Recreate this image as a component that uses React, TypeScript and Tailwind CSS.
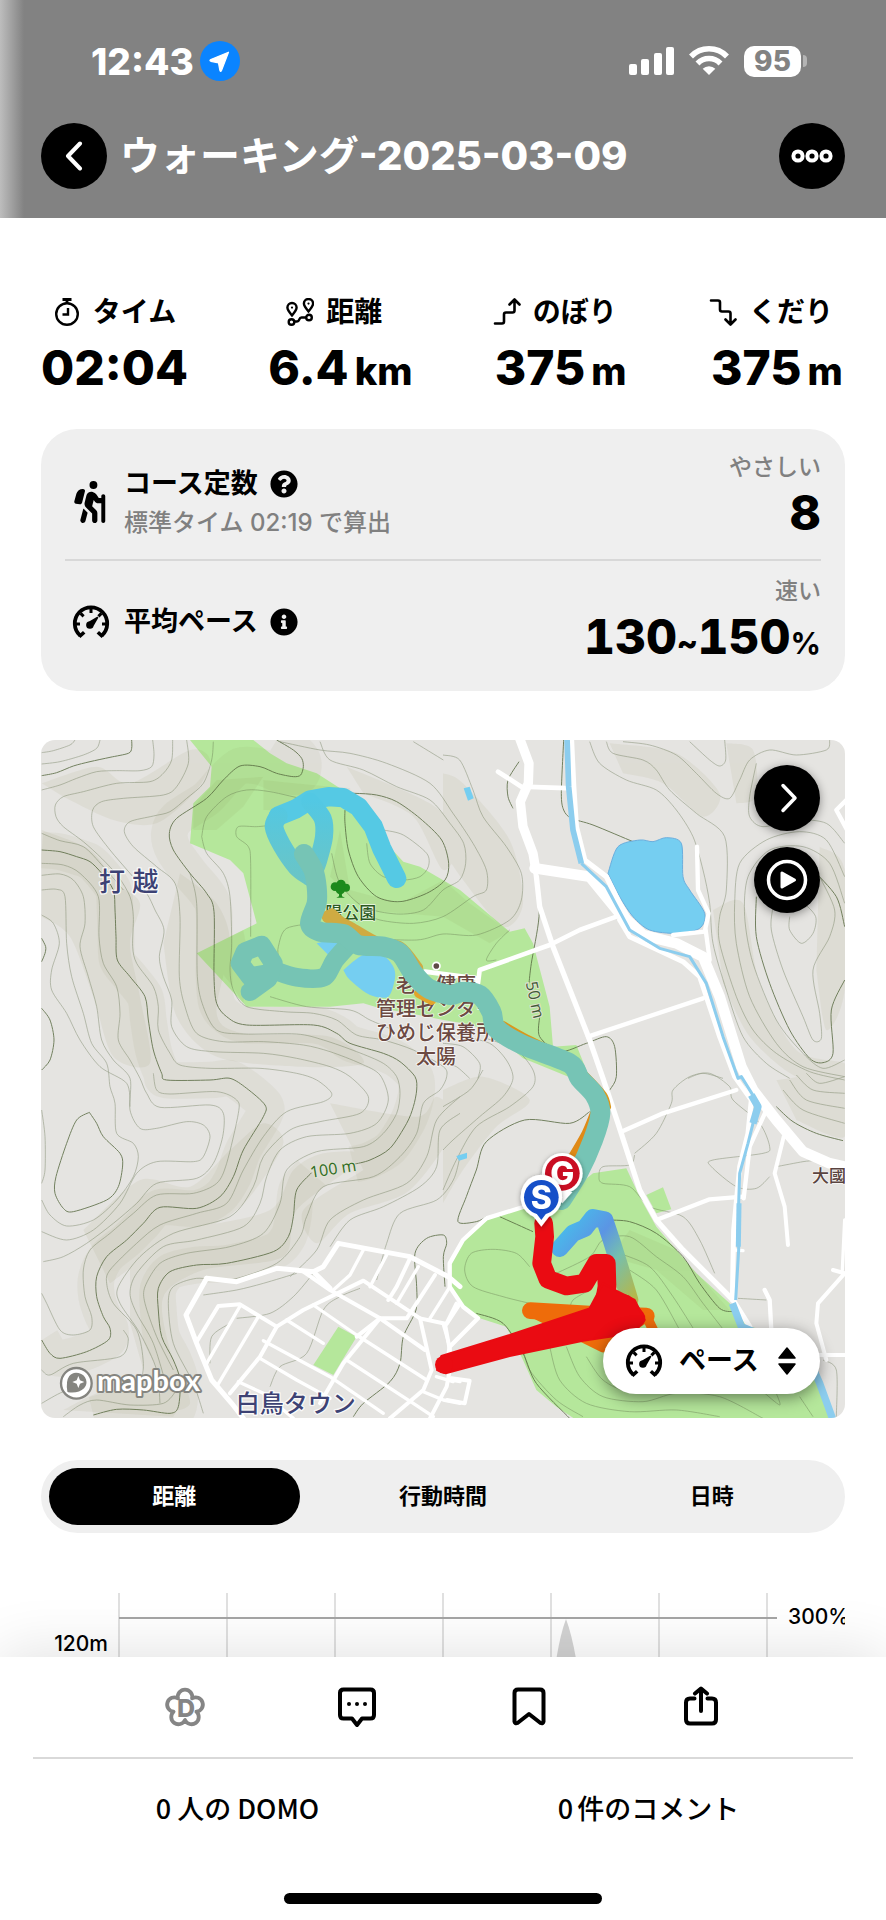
import React, { useState } from "react";
import { FaInfoCircle, FaQuestionCircle } from "react-icons/fa";
import { FaPersonHiking } from "react-icons/fa6";

/* ---------- map geometry ---------- */

// The map is split into four tiles; a letter in a trace switches the tile origin.
const TILES: Record<string, [number, number]> = {
  A: [-33, -30],
  B: [1206, -30],
  C: [-33, 990],
  D: [1206, 990],
};

function points(trace: string): [number, number][] {
  let origin = TILES.A;
  const out: [number, number][] = [];
  for (const token of trace.trim().split(/\s+/)) {
    if (TILES[token]) {
      origin = TILES[token];
    } else {
      const [x, y] = token.split(",").map(Number);
      out.push([x + origin[0], y + origin[1]]);
    }
  }
  return out;
}

function straight(trace: string, close = false) {
  return "M" + points(trace).map((p) => p.join(" ")).join("L") + (close ? "Z" : "");
}

function smooth(trace: string) {
  const p = points(trace);
  let d = `M${p[0][0]} ${p[0][1]}`;
  for (let i = 0; i < p.length - 1; i++) {
    const a = p[i - 1] || p[i];
    const b = p[i];
    const c = p[i + 1];
    const e = p[i + 2] || c;
    d += `C${b[0] + (c[0] - a[0]) / 7} ${b[1] + (c[1] - a[1]) / 7} ${c[0] - (e[0] - b[0]) / 7} ${c[1] - (e[1] - b[1]) / 7} ${c[0]} ${c[1]}`;
  }
  return d;
}

const majorContours = [
  "A 35,137 80,128 130,108 180,95 240,82 295,70 305,55 305,30",
  "A 35,360 90,365 140,380 180,395 215,430 250,480 255,540 258,620 262,690 300,740 345,800 355,870 370,960 395,1030 C 410,30 540,30 600,25 650,55 705,105 700,140 640,240 610,320 570,380 500,415 390,412 340,460 290,510 230,560 200,620 200,680 220,740 240,775 235,810 170,845 90,865 60,850 35,810",
  "A 740,30 790,60 815,85 820,110 812,135 790,140 740,130 690,110 630,108 580,150 530,205 440,265 418,310 430,360 480,430 530,490 552,545 552,740 560,820 590,860 650,885 850,885 920,910 960,940 1060,970 1110,995 1155,1040 C 1160,60 1150,110 1130,160 1080,235 1020,270 970,283",
  "C 845,308 800,360 790,440 775,500 730,545 590,580 500,585 420,605 385,655 385,720 395,800 430,870 450,930 445,1010 420,1030 340,1020 260,1018 190,1035",
  "A 35,835 60,870 72,930 60,990 35,1020",
  "A 35,625 47,650 45,670 35,695",
  "A 930,190 975,190 1040,195 1100,215 1170,265 1235,330 1256,400 1245,450 1190,490 1110,515 1040,500 985,440 955,360 945,280 945,240",
  "C 178,127 200,160 220,200 270,250 278,285 265,350 230,390 130,425 100,415 75,370 78,320 110,220 140,150 178,127",
  "C 1245,650 1240,560 1250,520 1240,495 1190,505 1155,550 1160,650 1158,720 1120,800 1110,880 1080,935 1000,1000 970,1040",
  "B 228,95 195,150 195,200 210,235",
  "B 362,30 355,190 362,240 385,265 450,285 570,335",
  "B 285,420 288,560 265,700 258,760",
  "B 290,860 290,920 350,965 430,940 490,920 515,950 520,1040 D 500,60 475,90",
  "D 440,125 380,160 245,150 130,215 100,300 70,380 45,455 100,455 130,440",
  "D 170,440 270,485",
  "D 490,450 560,455 640,490 720,560 770,640 830,715 870,725",
  "D 100,730 180,760 240,850 280,940 380,1045",
  "D 1000,110 1050,155 1120,190 1200,212",
  "B 940,500 940,620 980,760 1040,900 1100,985 1140,998 1170,970 1165,840 1205,750",
  "B 1110,420 1180,500 1205,590",
];

const minorContours = [
  "A 35,68 70,62 120,45 135,30",
  "A 35,102 90,95 160,75 200,55 210,30",
  "A 35,180 90,165 140,145 200,125 260,122 330,122 365,110 372,75 368,30",
  "A 428,30 425,90 400,130 360,155 260,160 160,185 100,200 76,225 78,260 100,290 160,335 215,385 265,440 300,500 310,560 308,650 320,700 370,770 385,830 385,900 420,970 450,1005 540,1015 690,1015 800,1030 860,1050 C 905,70 880,95 770,125 700,200 640,300 590,400 500,430 390,465 320,520 240,600 230,640 250,700 320,780 340,880 330,960",
  "A 470,30 475,100 440,170 400,195 280,205 215,215 188,240 190,290 240,360 300,430 350,490 375,540 402,600 388,680 400,740 425,810 425,890 470,950 550,965 700,970 800,985 900,1010 960,1040 C 1015,80 990,130 870,155 780,180 700,260 670,350 600,440 430,490 330,560 265,650 270,700 330,790 380,900 390,1000",
  "A 550,35 545,90 520,160 470,205 420,245 370,258 300,275 283,305 310,350 380,410 435,460 450,560 448,740 465,830 500,910 580,935 700,935 820,945 900,965 990,1000 1050,1035 C 1075,90 1040,160 960,190 830,200 750,240 710,320 690,400 640,470 500,510 400,530 320,610 300,670 320,730 370,820 410,950",
  "A 480,430 500,520 502,740 520,830 560,900 640,912 800,912 880,930 980,965 1060,1000 1100,1040 C 1110,70 1100,130 1060,190 1000,230 860,245 770,300 750,400 700,490 600,530 470,550 390,580 345,650 345,700 380,800 430,900",
  "A 35,310 90,332 160,350 220,410 280,480",
  "A 35,400 100,405 150,430 205,500 207,620 220,700 260,770 270,850 265,930 300,990 330,1045 C 350,70 390,112 540,105 580,130 578,200 550,280 500,325 380,340 320,400 250,460 170,520 100,560 40,575",
  "A 35,436 90,432 130,450 160,500 165,580 150,650 175,740 200,830 215,930 250,990 300,1045 C 300,120 330,175 380,175 470,155 520,165 540,200 520,260 490,275 380,275 320,310 270,400 190,480 110,510 35,485",
  "A 35,480 80,478 105,500 110,640 125,740 160,850 185,940 230,1000 C 240,50 255,100 260,190 310,220 325,260 310,320 260,390 190,450 110,468 60,435 35,390",
  "A 35,555 70,580 88,640 65,720 65,780 110,850 150,930 210,1010 C 290,40 300,110",
  "A 370,1030 C 380,60 420,72 560,65 620,90 625,130 590,280 560,340 490,370 380,375 310,430 240,490 180,540 160,600 165,680 185,740 180,780 130,795 90,780 50,700 35,670",
  "A 515,320 530,260 590,200 650,180 720,185 830,210",
  "A 515,320 530,370 580,430 600,500 605,640 600,720 610,780 650,830 760,845 850,850 920,870 980,915 1060,930 1150,960 1240,1010 C 1250,20 1230,60 1180,100 1160,190 1110,260 1030,320 880,350 830,440 810,500 740,580 600,630 500,625 430,650 415,700 430,820 490,940 520,1030",
  "A 730,285 680,290 625,290 620,320 655,350 662,400 662,620",
  "A 720,800 830,830 960,840 1020,870 1090,900",
  "A 870,578 770,595 745,650 745,680",
  "A 1060,300 1120,315 1190,370 1195,410 1170,440 1120,450 1060,440 1020,400 1010,340",
  "A 870,35 900,90 1000,120 1100,170 1200,210 1260,280 B 62,340 68,400 50,450 0,480 A 1180,540 1100,552 1000,530 930,460 905,370",
  "B 0,75 50,90 90,180 120,260 190,350 235,430 235,510 200,570 100,615 0,612 A 1160,630 1000,625",
  "A 750,35 870,60 960,70 1070,100 1200,160 B 30,250 90,340 130,420 130,480 90,500 0,560 A 1150,580 1050,570 980,540",
  "A 1150,35 1240,90",
  "B 160,690 130,690 160,640 200,600",
  "B 490,35 510,70 600,90 640,120 680,180 760,250 845,320 850,480 830,560 830,640 880,800 930,900 1000,970 1100,1025 1205,1050",
  "B 440,35 470,100 550,150 640,180 700,240 750,320 780,420 800,520 810,640 850,780 900,920 970,1000 1040,1045",
  "B 540,35 620,45 700,75 760,130 820,190 860,205 890,150 920,90 980,60 1060,75 1150,60 1160,30",
  "B 740,35 800,90 830,108 848,90 845,30",
  "B 1040,560 1040,600 1075,640 1110,610 1118,560 1080,520 1050,530",
  "B 990,530 985,600 1020,720 1080,860 1110,930 1135,925 1130,850 1110,720 1160,620 1175,540 1130,440",
  "B 1205,340 1150,280 1060,270 960,290 920,260 920,200 940,100",
  "B 1205,440 1150,330 1070,305 970,330 890,400 875,520 880,640 920,800 1000,940 1080,1010 1205,1040",
  "B 1205,520 1160,400 1080,350 980,360 915,440 905,560 930,700 1000,870 1080,970 1140,1015 1205,990",
  "B 0,940 60,950 110,1000 105,1045",
  "B 0,1000 40,1010 80,1045",
  "B 60,920 140,940 190,990 210,1045 D 180,80 110,140 30,210 0,240",
  "B 130,925 220,960 270,1020 D 270,50 200,110 100,170 40,270 0,360",
  "D 120,0 80,60 0,110",
  "B 735,1045 780,1030 840,1045",
  "C 1290,80 1220,150 1190,260 1130,340 1000,390 900,450 860,540 780,620",
  "C 1290,130 1230,180 1220,290 1170,350 1060,410 960,450 900,530",
  "C 1290,260 1270,330 1220,390 1110,430 1070,520 1040,630",
  "C 520,675 620,660 700,640 800,610",
  "C 620,745 720,730 790,680 850,610",
  "C 540,880 545,800 600,760",
  "C 720,950 750,890 830,850 880,720 930,680 990,655",
  "C 35,900 60,915 130,880 270,860 295,810 280,780",
  "C 100,1040 150,1005 200,990 300,1005 400,1000 440,960",
  "C 35,1000 100,965 170,950",
  "C 35,120 45,200 45,300 35,340",
  "D 575,250 640,190 685,100 690,60 740,20 800,10 860,50 870,90 950,160 980,230 960,250 810,270 805,290 880,350 940,355 980,320",
  "D 575,255 560,285 480,290 468,320 480,340 560,350 620,410 720,440 770,510 815,610",
  "D 1000,290 1080,275 1110,272",
  "D 1090,10 1130,40 1205,20",
  "D 1060,15 1110,60 1205,70",
  "D 1040,30 1090,90 1205,115",
  "D 1020,60 1080,120 1205,160",
  "D 340,610 440,560 480,510 560,500 640,560 720,620 780,700 850,790",
  "D 260,700 180,680 90,650 65,600 85,550 150,538 220,550 260,590",
  "D 530,550 620,590 690,680 760,790",
  "D 560,600 640,660 710,780",
  "D 380,720 390,690 440,660",
  "D 240,830 260,900 340,990 420,1040",
  "D 320,830 350,930 430,1000 560,1025 700,1020 830,1040",
  "D 370,830 410,920 480,980 600,995 700,970 830,980 960,1045",
  "D 430,860 480,930 560,965 700,960",
  "D 960,965 1010,1005 1000,970",
  "D 1070,980 1110,1040",
  "D 885,685 970,690",
  "D 1140,870 1180,900 1180,1040",
];

const shades = [
  "A 35,160 200,110 300,160 480,60 540,90 500,180 380,280 250,270 100,200",
  "A 35,300 180,360 260,460 330,520 300,640 330,800 360,1000 250,980 190,800 120,620 35,560",
  "A 450,430 560,520 600,640 560,850 640,910 900,920 1000,1000 800,1010 560,980 440,860 400,640",
  "A 700,150 900,170 960,180 830,240 700,240",
  "A 950,110 1200,220 1290,320 1240,420 1150,260 1000,190",
  "B 0,130 60,160 200,330 240,520 180,590 60,450 0,360",
  "B 500,40 700,70 830,190 780,260 660,160 540,130",
  "B 850,40 930,60 940,200 880,220",
  "B 810,540 900,520 950,760 1060,960 1205,1000 1205,1045 1060,1040 920,920 840,760",
  "B 1130,350 1205,420 1205,780 1150,900 1120,720",
  "C 160,480 330,330 480,350 600,240 700,160 760,220 660,380 560,460 380,540 240,640",
  "C 300,560 480,480 720,420 790,300 880,250 1000,260 800,420 760,560 520,600 400,680 420,840 480,1000 380,1000 300,760",
  "C 900,100 1160,140 1220,80 1280,160 1140,360 960,430 860,520 820,420 1000,300",
  "C 100,1020 240,960 440,990 430,1040",
  "D 0,60 120,20 260,90 160,170 60,300 0,400",
  "D 1000,30 1205,20 1205,200 1060,150",
];

const roads: [number, string][] = [
  [28, "B 228,20 258,100 256,160 232,215 240,290 270,370 278,418"],
  [14, "B 165,125 235,170 390,175"],
  [16, "B 385,20 392,170 400,290 425,390 490,440 530,520 560,570"],
  [32, "B 275,415 440,440 530,550 600,615 700,640 780,680 830,800 895,1010 D 930,60 1000,150 1080,245 1160,280 1215,292"],
  [16, "B 278,420 290,530 330,650 440,930 480,1045 D 525,160 590,360 640,450 720,540 870,690 920,770"],
  [14, "B 520,560 410,600 320,645 110,720 105,760 A 1340,745 1185,725"],
  [13, "B 435,920 780,805"],
  [15, "B 530,570 560,620 720,695 770,740 830,920 875,1040 D 925,90 915,190 890,290 872,480 868,690"],
  [13, "D 970,120 920,230 902,385"],
  [13, "B 762,350 765,480 797,550 785,605 690,615"],
  [13, "B 788,600 800,690"],
  [13, "D 535,185 660,130 880,60"],
  [13, "D 640,450 800,388 900,380"],
  [12, "D 1022,200 995,310 1025,410 1035,525"],
  [10, "D 875,540 900,542"],
  [13, "D 965,660 980,690 985,780"],
  [12, "D 1170,600 1205,610 1125,700 1120,760 1150,870"],
  [10, "D 1205,450 1198,600"],
  [12, "D 1100,855 1215,855"],
  [13, "B 1215,205 1180,240 1215,305"],
  [13, "D 250,408 130,445 60,510 20,580 20,650 60,710 105,745 20,830 10,900"],
  [10, "D 40,700 10,760"],
  [10, "D 0,760 20,830"],
  [12, "D 25,925 80,932 65,1000 12,990"],
  [10, "D -20,920 30,935"],
  [15, "C 530,625 620,635 740,595 850,605 900,655"],
  [15, "C 850,605 880,590 925,520 1140,560 1255,620 1290,650"],
  [15, "C 530,625 468,735 500,820 545,930 605,1000 640,1045"],
  [12, "C 820,605 900,660 1050,745 1185,840"],
  [12, "C 500,815 565,708 630,703 740,770"],
  [10, "C 530,880 632,705"],
  [10, "C 560,950 685,740"],
  [12, "C 600,970 690,860 740,770 820,720 1000,632 1170,745 1250,762 1290,700"],
  [10, "C 770,750 880,820"],
  [10, "C 850,705 980,795 1190,930"],
  [10, "C 700,812 900,920 1060,1030"],
  [10, "C 690,865 800,930 900,985"],
  [10, "C 625,935 700,970 790,1045"],
  [10, "C 950,870 1150,1000 1210,1040"],
  [12, "C 1140,565 1100,650 1075,690"],
  [12, "C 1215,615 1130,745 1050,745 940,880 870,1000"],
  [10, "C 1000,540 960,615 910,660"],
  [10, "C 1070,555 1020,650"],
  [10, "C 1165,590 1100,700"],
  [12, "C 1050,745 980,800"],
  [10, "C 1260,650 1200,745"],
  [12, "C 1170,745 1205,900 1180,960 1080,1045"],
  [12, "C 1245,762 1265,870 1250,950 1200,1045"],
  [10, "C 1265,930 1290,935"],
  [10, "C 1180,965 1240,990 1290,1000"],
];

const rivers = [
  "B 372,20 377,170 390,300 415,400",
  "B 415,400 490,470 560,600 650,655 740,680 790,760 840,920 885,1045 D 895,20 945,100 915,220 890,310 887,400 887,540 878,690",
  "D 868,700 895,770 1090,850 1130,940 1170,1050",
];

const trunk =
  "A 822,372 850,420 860,470 860,520 840,580 870,605 940,612 985,645 1060,650 1110,670 1150,730 1195,775 1260,795 B 60,785 110,795 145,845 160,895 240,945 380,1000 D 410,25 455,75 472,130 450,210 405,310 355,390";

function RouteMap() {
  return (
    <svg viewBox="0 0 2412 2034" className="block h-auto w-full" role="img" aria-label="ルートマップ">
      <defs>
        <linearGradient id="branch" x1="0" y1="0" x2="1" y2="1">
          <stop offset="0" stopColor="#45c3ec" />
          <stop offset="0.4" stopColor="#5b95e4" />
          <stop offset="0.65" stopColor="#76bfae" />
          <stop offset="1" stopColor="#b2b84e" />
        </linearGradient>
        <linearGradient id="loop" gradientUnits="userSpaceOnUse" x1="0" y1="180" x2="0" y2="480">
          <stop offset="0" stopColor="#52c8e4" />
          <stop offset="1" stopColor="#70c4be" />
        </linearGradient>
        <filter id="pin" x="-30%" y="-30%" width="160%" height="160%">
          <feDropShadow dx="0" dy="4" stdDeviation="8" floodOpacity="0.4" />
        </filter>
      </defs>
      <rect width="2412" height="2034" fill="#e5e4e1" />
      <g fill="#b5e79b">
        <path d={straight("A 480,30 670,30 720,70 770,100 860,130 930,175 1000,240 1060,330 1120,395 1170,410 1290,480 B 200,605 245,595 270,640 320,830 330,950 400,945 440,1045 D 440,20 400,30 B 240,985 140,900 60,880 A 1240,870 1140,850 1050,835 1000,820 900,830 650,830 500,670 640,600 680,580 640,430 600,390 480,340 490,220 540,170 545,110", true)} />
        <path d={straight("D 550,295 450,310 350,390 230,415 130,445 60,510 25,580 25,650 60,710 110,745 190,770 240,870 280,960 340,1010 400,1050 1160,1050 1130,960 1060,800 920,770 860,700 760,610 640,470 590,380", true)} />
        <path d={straight("D 610,375 660,352 685,418 640,430", true)} />
        <path d={straight("C 925,770 980,800 910,915 850,885", true)} />
      </g>
      <g fill="#7d7a3c" opacity="0.07">
        {shades.map((s) => (
          <path key={s} d={smooth(s)} />
        ))}
        <path d={straight("A 560,150 700,140 640,230 560,300 490,300 490,230", true)} />
        <path d={straight("A 930,300 960,480 1110,520 1240,450 B 80,520 200,605 140,640 0,560 A 1000,540 900,440", true)} />
        <path d={straight("A 640,600 520,660 600,760 640,820 660,700", true)} />
        <path d={straight("D 500,560 640,600 780,720 860,720 700,540 560,480", true)} />
      </g>
      <g fill="none" stroke="#77763f" strokeWidth="110" opacity="0.06">
        <path d={smooth(majorContours[1])} />
        <path d={smooth(majorContours[2])} />
        <path d={smooth(majorContours[3])} />
      </g>
      <g fill="none" stroke="#5c6b47" strokeWidth="2" opacity="0.55">
        {minorContours.map((c) => (
          <path key={c} d={smooth(c)} />
        ))}
      </g>
      <g fill="none" stroke="#56683f" strokeWidth="3" opacity="0.8">
        {majorContours.map((c) => (
          <path key={c} d={smooth(c)} />
        ))}
      </g>

      <g fill="#75cef1">
        <path d={smooth("B 495,430 525,350 590,330 630,335 670,323 715,340 720,440 740,480 785,550 770,595 700,610 620,600 570,560 530,500 495,430")} stroke="#6aaede" strokeWidth="3" />
        <path d={smooth("A 940,720 1000,674 1060,678 1090,710 1095,745 1075,800 1020,795 960,750 940,720")} />
        <path d={straight("A 860,640 940,620 938,660 910,690", true)} />
        <path d={straight("B 62,175 80,170 92,205 75,212", true)} />
        <path d={straight("D 40,258 72,248 72,265 48,272", true)} />
      </g>

      <g fill="none" stroke="#fff" strokeLinejoin="round" strokeLinecap="round">
        {roads.map(([w, r]) => (
          <path key={r} d={straight(r)} strokeWidth={w} />
        ))}
      </g>
      <g fill="none" stroke="#8ccdee" strokeLinejoin="round">
        <path d={straight(rivers[0])} strokeWidth="17" />
        <path d={straight(rivers[1])} strokeWidth="9" />
        <path d={straight(rivers[2])} strokeWidth="22" />
        <path d={straight("D 925,75 945,110 930,160")} strokeWidth="22" />
        <path d={straight("D 888,400 886,530")} strokeWidth="15" />
      </g>

      <g
        className="font-['Liberation_Sans','Noto_Sans_CJK_JP',sans-serif] font-medium"
        stroke="#ffffffcc"
        strokeWidth="8"
        strokeLinejoin="round"
        paintOrder="stroke"
      >
        <g fill="#3d4274">
          <text x="174" y="453" fontSize="78">打 越</text>
          <text x="584" y="2015" fontSize="72">白鳥タウン</text>
        </g>
        <text x="853" y="537" fontSize="51" fill="#2c5a22" strokeWidth="4">陽公園</text>
        <g fill="#6c4a43" fontSize="60" textAnchor="middle" strokeWidth="5">
          <text x="1185" y="757">老人健康</text>
          <text x="1185" y="829">管理センター</text>
          <text x="1185" y="901">ひめじ保養所</text>
          <text x="1185" y="973">太陽</text>
        </g>
        <text x="2313" y="1327" fontSize="51" fill="#5a4440" strokeWidth="4">大國</text>
      </g>
      <g className="font-['Open_Sans',sans-serif]" fontSize="48" textAnchor="middle" stroke="#e0e2d2" strokeWidth="6" paintOrder="stroke">
        <text transform="translate(879 1303) rotate(-9)" fill="#2f6b23">100 m</text>
        <text transform="translate(1466 783) rotate(78)" fill="#405a35">50 m</text>
      </g>
      <circle cx="1186" cy="678" r="11" fill="#5e4a46" stroke="#fff" strokeWidth="5" />
      <g transform="translate(898 447)" fill="#1c8a1c">
        <circle cx="-16" cy="-7" r="13" />
        <circle cx="2" cy="-14" r="14" />
        <circle cx="17" cy="-4" r="12" />
        <circle cx="0" cy="2" r="14" />
        <path d="M-4 2h8l1 20 9 4h-26l8-4z" />
      </g>

      <g fill="none" strokeLinecap="round" strokeLinejoin="round">
        <path d={smooth("A 895,560 960,595 1040,640 1110,655 1160,715")} stroke="#cfab42" strokeWidth="40" />
        <path d={straight("A 905,550 925,568")} stroke="#cfab42" strokeWidth="30" />
        <path d={straight("A 1165,790 1205,812")} stroke="#e2a52b" strokeWidth="26" />
        <path d={smooth("B 180,885 250,925 370,985 D 425,15 480,75 492,110")} stroke="#d9981c" strokeWidth="24" />
        <path d={smooth("D 455,130 430,190 390,260")} stroke="#e08a17" strokeWidth="28" />
        <path d={straight("A 1100,445 1080,405 1055,355 1030,290 985,230 940,203 895,200 840,210 795,238 745,258")} stroke="#55c9e4" strokeWidth="58" />
        <path d={smooth("A 745,258 732,290 755,345 800,410 840,440")} stroke="url(#loop)" strokeWidth="56" />
        <path d={smooth("A 840,215 878,265 882,320 865,390 850,430")} stroke="url(#loop)" strokeWidth="54" />
        <path d={smooth("A 955,645 915,690 880,742 800,742 730,720")} stroke="#76c4b4" strokeWidth="56" />
        <path d={straight("A 660,785 715,745 730,700 695,645 645,665 630,700 660,740 715,730")} stroke="#76c4b4" strokeWidth="56" />
        <path d={smooth(trunk)} stroke="#76c4b5" strokeWidth="60" />
        <path d={straight("D 350,535 390,490 425,475 450,443 485,450 505,510 530,590 560,690")} stroke="url(#branch)" strokeWidth="52" />
        <path d={straight("D 262,722 440,732 610,738")} stroke="#ee6c0a" strokeWidth="50" />
        <path d={straight("D 262,722 480,830 600,745", true)} fill="#ee6c0a" stroke="#ee6c0a" strokeWidth="34" />
        <path d={straight("D 612,742 640,800")} stroke="#ee6c0a" strokeWidth="30" />
        <path d={straight("D 302,460 305,500 296,580 315,628 370,648 425,640 460,580 490,580 492,650 478,730")} stroke="#ea0b12" strokeWidth="56" />
        <path d={straight("D 545,700 580,745")} stroke="#ea0b12" strokeWidth="54" />
      </g>
      <path
        d={straight("D -5,858 200,795 440,715 480,640 515,660 575,690 605,750 570,790 420,812 200,858 8,910 -18,900", true)}
        fill="#ea0b12"
        stroke="#ea0b12"
        strokeWidth="6"
        strokeLinejoin="round"
      />
      <circle cx="1209" cy="1874" r="27" fill="#ea0b12" />

      <g className="font-[Inter,sans-serif] font-extrabold" textAnchor="middle" fill="#fff">
        <g filter="url(#pin)">
          <path d="M1564 1390l-30-34h60z" fill="#fff" />
          <circle cx="1564" cy="1300" r="61" fill="#fff" />
          <circle cx="1564" cy="1300" r="52" fill="#c90d24" />
          <text x="1564" y="1335" fontSize="96">G</text>
        </g>
        <g filter="url(#pin)">
          <path d="M1501 1460l-34-44a61 61 0 1 1 68 0z" fill="#fff" />
          <circle cx="1501" cy="1372" r="62" fill="#fff" />
          <circle cx="1501" cy="1372" r="52" fill="#1450c8" />
          <path d="M1501 1440l-18-24h36z" fill="#1450c8" />
          <text x="1501" y="1407" fontSize="96">S</text>
        </g>
      </g>

      <g>
        <circle cx="106" cy="1930" r="46" fill="#fff" stroke="#858580" strokeWidth="7" />
        <path d="M82 1954c-7-42 10-56 30-52 22 5 27 28 15 41-11 11-28 13-45 11z" fill="#858580" stroke="#858580" strokeWidth="6" strokeLinejoin="round" />
        <path d="M112 1908l5 13 13 5-13 5-5 13-5-13-13-5 13-5z" fill="#fff" />
        <text x="168" y="1954" fontSize="87" className="font-[Lato,sans-serif] font-bold" fill="#fff" stroke="#858580" strokeWidth="12" strokeLinejoin="round" paintOrder="stroke">
          mapbox
        </text>
      </g>
    </svg>
  );
}

/* ---------- icons ---------- */

function GaugeIcon() {
  return (
    <svg viewBox="0 0 38 34" className="h-[34px] w-[38px]" fill="none" stroke="currentColor" aria-hidden="true">
      <path d="M8.200 30.600a16.200 16.200 0 1 1 21.600 0" strokeWidth="3.800" />
      <path d="M7.200 31.800l5-4.600M30.800 31.800l-5-4.600" strokeWidth="3.600" />
      <path d="M19 3v5M8.600 8.400l3 3M29.400 8.400l-3 3M3.500 19H8M30 19h4.500" strokeWidth="3" />
      <path d="M25.500 12.500l-4.600 8a3 3 0 1 1-3.400-3.400z" fill="currentColor" strokeWidth="1.600" strokeLinejoin="round" />
    </svg>
  );
}

function StopwatchIcon() {
  return (
    <svg viewBox="0 0 28 28" className="size-7" fill="none" stroke="currentColor" strokeWidth="2.400" aria-hidden="true">
      <circle cx="14" cy="16" r="10.800" />
      <path d="M9.500 1.500h9M14 2v3" strokeWidth="2.800" />
      <path d="M15 10v6.500H9.500" />
    </svg>
  );
}

function RouteIcon() {
  return (
    <svg viewBox="0 0 28 28" className="size-7" fill="none" stroke="currentColor" strokeWidth="2.400" aria-hidden="true">
      <path d="M6 17.500C3 14 1.400 12 1.400 9.600a4.600 4.600 0 0 1 9.200 0C10.600 12 9 14 6 17.500z" />
      <path d="M22.500 13.500c-3-3.500-4.600-5.500-4.600-7.900a4.600 4.600 0 0 1 9.200 0c0 2.400-1.600 4.400-4.600 7.900z" />
      <circle cx="6" cy="9.600" r="1.100" fill="currentColor" stroke="none" />
      <circle cx="22.500" cy="5.600" r="1.100" fill="currentColor" stroke="none" />
      <circle cx="5.500" cy="24" r="2.800" />
      <circle cx="23" cy="19.500" r="2.800" />
      <path d="M8.500 23.500h2.500c3 0 1.500-4 4.500-4H20" />
    </svg>
  );
}

function UpIcon() {
  return (
    <svg viewBox="0 0 28 28" className="size-7" fill="none" stroke="currentColor" strokeWidth="2.600" strokeLinejoin="round" strokeLinecap="round" aria-hidden="true">
      <path d="M2 25.500h7q2 0 2-2v-7q0-2 2-2h6.500q2 0 2-2V3M16.500 6.500l5-5 5 5" />
    </svg>
  );
}

function DownIcon() {
  return (
    <svg viewBox="0 0 28 28" className="size-7" fill="none" stroke="currentColor" strokeWidth="2.600" strokeLinejoin="round" strokeLinecap="round" aria-hidden="true">
      <path d="M2 2.500h7q2 0 2 2v7q0 2 2 2h6.500q2 0 2 2V25M16.500 21.500l5 5 5-5" />
    </svg>
  );
}

/* ---------- page pieces ---------- */

function Stat({ icon, label, value, unit }: { icon: React.ReactNode; label: string; value: string; unit?: string }) {
  return (
    <div className="flex flex-col items-center">
      <dt className={`flex items-center gap-3 text-[28px] leading-10 font-bold ${unit ? "pr-3" : ""}`}>
        {icon}
        {label}
      </dt>
      <dd className="flex items-baseline gap-1.5 text-[48px] leading-[72px] font-extrabold">
        {value}
        {unit && <span className="text-[38px] leading-none">{unit}</span>}
      </dd>
    </div>
  );
}

const tabs = ["距離", "行動時間", "日時"];
const gridLines = [78, 186, 294, 402, 510, 618, 726];

export default function App() {
  const [tab, setTab] = useState(tabs[0]);

  return (
    <div className="flex h-screen flex-col bg-white font-[Inter,'Noto_Sans_CJK_JP',sans-serif] text-black">
      <header className="shrink-0 bg-[linear-gradient(90deg,#bdbdbd_0,#828282_24px)] px-[41px] pb-[29px] text-white">
        <div className="flex h-[122px] items-center justify-between pr-[38px] pl-[50px]">
          <div className="flex items-center gap-1.5">
            <time className="text-[37px] leading-none font-extrabold">12:43</time>
            <svg viewBox="0 0 40 40" className="size-10" aria-hidden="true">
              <circle cx="20" cy="20" r="20" fill="#0a84ff" />
              <path d="M28.500 11.200L21.500 29.500q-1 2-1.700-.3l-1.300-7.300-7.600-1.600q-1.900-.8-.1-1.700z" fill="#fff" stroke="#fff" strokeWidth="1.200" strokeLinejoin="round" />
            </svg>
          </div>
          <div className="flex items-center gap-[15px]">
            <svg viewBox="0 0 46 30" className="h-[30px] w-[46px]" fill="#fff" aria-label="電波強度">
              <rect x="1" y="18" width="8" height="11" rx="2" />
              <rect x="13" y="13" width="8" height="16" rx="2" />
              <rect x="26" y="7" width="8" height="22" rx="2" />
              <rect x="38" y="1" width="8" height="28" rx="2" />
            </svg>
            <svg viewBox="0 0 40 30" className="h-[30px] w-10" fill="none" stroke="#fff" strokeWidth="5.500" aria-label="Wi-Fi">
              <path d="M2 10.500a25 25 0 0 1 36 0" />
              <path d="M8.500 17.500a16 16 0 0 1 23 0" />
              <path d="M20 29l-6.300-6.200a9 9 0 0 1 12.600 0z" fill="#fff" stroke="none" />
            </svg>
            <div className="flex items-center gap-0.5">
              <span className="flex h-[31px] w-[57px] items-center justify-center rounded-[10px] bg-white text-[28px] leading-none font-extrabold text-[#828282]">
                95
              </span>
              <span className="h-3 w-1 rounded-r-full bg-[#b4b4b4]" />
            </div>
          </div>
        </div>
        <div className="flex h-[67px] items-center gap-[13px]">
          <button aria-label="戻る" className="flex size-[66px] shrink-0 items-center justify-center rounded-full bg-black">
            <svg viewBox="0 0 18 30" className="h-[30px] w-[18px]" fill="none" stroke="#fff" strokeWidth="4" strokeLinecap="round" strokeLinejoin="round">
              <path d="M15 2.500L3 15l12 12.500" />
            </svg>
          </button>
          <h1 className="flex-1 truncate text-[40px] leading-[60px] font-bold">
            ウォーキング<span className="font-extrabold">-2025-03-09</span>
          </h1>
          <button aria-label="メニュー" className="flex size-[66px] shrink-0 items-center justify-center rounded-full bg-black">
            <svg viewBox="0 0 42 14" className="h-[14px] w-[42px]" fill="none" stroke="#fff" strokeWidth="4">
              <circle cx="7" cy="7" r="4.600" />
              <circle cx="21" cy="7" r="4.600" />
              <circle cx="35" cy="7" r="4.600" />
            </svg>
          </button>
        </div>
      </header>

      <main className="min-h-0 flex-1 overflow-x-hidden overflow-y-auto px-[41px] [scrollbar-width:none]">
        <dl className="flex justify-between pt-[74px]">
          <Stat icon={<StopwatchIcon />} label="タイム" value="02:04" />
          <Stat icon={<RouteIcon />} label="距離" value="6.4" unit="km" />
          <Stat icon={<UpIcon />} label="のぼり" value="375" unit="m" />
          <Stat icon={<DownIcon />} label="くだり" value="375" unit="m" />
        </dl>

        <section className="mt-[25px] divide-y-2 divide-[#d8d8d8] rounded-[36px] bg-[#efefef] px-6 py-2">
          <div className="flex items-center justify-between pt-3 pb-[18px]">
            <div className="flex items-center gap-3.5 pt-3.5">
              <span className="flex w-[45px] justify-center pl-1">
                <FaPersonHiking className="size-[42px]" />
              </span>
              <div>
                <h2 className="flex items-center gap-3 text-[27px] leading-[42px] font-bold">
                  コース定数
                  <FaQuestionCircle className="size-7" />
                </h2>
                <p className="text-[24px] leading-9 font-medium text-[#808080]">標準タイム 02:19 で算出</p>
              </div>
            </div>
            <div className="text-right">
              <p className="text-[23px] leading-9 font-medium text-[#808080]">やさしい</p>
              <p className="text-[48px] leading-[56px] font-extrabold">8</p>
            </div>
          </div>
          <div className="flex items-center justify-between pt-3 pb-[18px]">
            <div className="flex items-center gap-3.5 pt-1.5">
              <span className="flex w-[45px] justify-end">
                <GaugeIcon />
              </span>
              <h2 className="flex items-center gap-3 text-[27px] leading-[42px] font-bold">
                平均ペース
                <FaInfoCircle className="size-7" />
              </h2>
            </div>
            <div className="text-right">
              <p className="text-[23px] leading-9 font-medium text-[#808080]">速い</p>
              <p className="text-[48px] leading-[56px] font-extrabold tabular-nums">
                130<span className="text-[32px] leading-none">~</span>150<span className="text-[30px] leading-none font-bold">%</span>
              </p>
            </div>
          </div>
        </section>

        <section className="relative mt-[49px] overflow-hidden rounded-[14px]">
          <RouteMap />
          <div className="absolute top-[25px] right-[25px] flex flex-col gap-4">
            <button aria-label="次へ" className="flex size-[66px] items-center justify-center rounded-full bg-black shadow-[0_2px_10px_rgba(0,0,0,0.4)]">
              <svg viewBox="0 0 18 30" className="ml-1 h-[30px] w-[18px]" fill="none" stroke="#fff" strokeWidth="3.500" strokeLinecap="round" strokeLinejoin="round">
                <path d="M3 2.500L15 15 3 27.500" />
              </svg>
            </button>
            <button aria-label="再生" className="flex size-[66px] items-center justify-center rounded-full bg-black shadow-[0_2px_10px_rgba(0,0,0,0.4)]">
              <svg viewBox="0 0 42 42" className="size-[42px]" fill="none" stroke="#fff">
                <circle cx="21" cy="21" r="18.500" strokeWidth="3.500" />
                <path d="M16 14v14l12.500-7z" fill="#fff" strokeWidth="3" strokeLinejoin="round" />
              </svg>
            </button>
          </div>
          <label className="absolute right-[25px] bottom-6 flex h-[66px] items-center rounded-full bg-white pr-6 pl-[22px] shadow-[0_4px_16px_rgba(0,0,0,0.45)]">
            <span className="mr-4">
              <GaugeIcon />
            </span>
            <select aria-label="表示項目" className="appearance-none bg-transparent text-[27px] leading-9 font-bold outline-none">
              <option>ペース</option>
            </select>
            <svg viewBox="0 0 18 28" className="ml-[18px] h-7 w-[18px]" stroke="#000" strokeWidth="1.500" strokeLinejoin="round" aria-hidden="true">
              <path d="M9 1l8 10H1zM9 27l8-10H1z" />
            </svg>
          </label>
        </section>

        <div role="tablist" className="mt-[42px] grid grid-cols-3 rounded-full bg-[#efefef] p-2">
          {tabs.map((t, i) => (
            <button
              key={t}
              role="tab"
              aria-selected={tab === t}
              onClick={() => setTab(t)}
              className={`h-[57px] rounded-full text-[22px] font-bold ${i === 0 ? "mr-3" : i === 2 ? "ml-3" : ""} ${tab === t ? "bg-black text-white" : "text-black"}`}
            >
              {t}
            </button>
          ))}
        </div>

        <section className="mt-[60px] pb-4">
          <svg viewBox="0 0 804 200" className="block h-auto w-full font-[Inter,sans-serif] font-medium" role="img" aria-label="標高とペースのグラフ">
            <path d="M511 100Q516 50 525 26Q534 50 540 100z" fill="#d3d3d3" />
            {gridLines.map((x) => (
              <path key={x} d={`M${x} 0V200`} stroke="#e0e0e0" strokeWidth="2" />
            ))}
            <path d="M78 25H736" stroke="#a4a4a4" strokeWidth="2" />
            <g fontSize="21">
              <text x="67" y="58" textAnchor="end">120m</text>
              <text x="747" y="31">300%</text>
            </g>
          </svg>
        </section>
      </main>

      <footer className="relative shrink-0 bg-white shadow-[0_-4px_56px_rgba(0,0,0,0.12)]">
        <nav className="grid grid-cols-4 justify-items-center px-[99px] py-[29px]">
          <button aria-label="DOMOを送る" className="text-[#858585]">
            <svg viewBox="0 0 42 42" className="size-[42px]" aria-hidden="true">
              <path
                d="M13.950 12.300A7.200 7.200 0 1 1 28.050 12.300A7.200 7.200 0 1 1 32.400 25.700A7.200 7.200 0 1 1 21 34A7.200 7.200 0 1 1 9.600 25.700A7.200 7.200 0 1 1 13.950 12.300z"
                fill="none"
                stroke="currentColor"
                strokeWidth="3.800"
                strokeLinejoin="round"
              />
              <text x="22" y="31" textAnchor="middle" fontSize="25" className="font-[Inter,sans-serif] font-extrabold" fill="currentColor">
                D
              </text>
            </svg>
          </button>
          <button aria-label="コメント">
            <svg viewBox="0 0 42 42" className="size-[42px]" fill="none" stroke="currentColor" strokeWidth="4" strokeLinejoin="round" aria-hidden="true">
              <path d="M7.500 3.500h27q3.500 0 3.500 3.500v22q0 3.500-3.500 3.500H26L21 39l-5-6.500H7.500Q4 32.500 4 29V7q0-3.500 3.500-3.500z" />
              <g fill="currentColor" stroke="none">
                <circle cx="13" cy="18" r="2" />
                <circle cx="21" cy="18" r="2" />
                <circle cx="29" cy="18" r="2" />
              </g>
            </svg>
          </button>
          <button aria-label="保存">
            <svg viewBox="0 0 42 42" className="size-[42px]" fill="none" stroke="currentColor" strokeWidth="4" strokeLinejoin="round" aria-hidden="true">
              <path d="M10 3.500h22q3.500 0 3.500 3.500v28.500q-.5 2.500-3 1.500L21 28 9.500 37q-2.500 1-3-1.500V7q0-3.500 3.500-3.500z" />
            </svg>
          </button>
          <button aria-label="共有">
            <svg viewBox="0 0 42 42" className="size-[42px]" fill="none" stroke="currentColor" strokeWidth="4" strokeLinecap="round" strokeLinejoin="round" aria-hidden="true">
              <path d="M14.500 12.500H10q-4 0-4 4v17q0 4 4 4h22q4 0 4-4v-17q0-4-4-4h-4.500M21 25V3.500M15 7.500l6-5 6 5" />
            </svg>
          </button>
        </nav>
        <div className="mx-[33px] border-t-2 border-[#d9d9d9]" />
        <div className="grid grid-cols-2 px-8 pt-[29px] pb-[65px] text-center font-['Noto_Sans_CJK_JP',sans-serif] text-[27px] leading-10 font-medium">
          <a href="#domo">
            0<span className="mx-1.5">人の</span>DOMO
          </a>
          <a href="#comments">
            0<span className="ml-1">件のコメント</span>
          </a>
        </div>
        <div className="mx-auto mb-4 h-[11px] w-[36%] rounded-full bg-black" />
      </footer>
    </div>
  );
}
